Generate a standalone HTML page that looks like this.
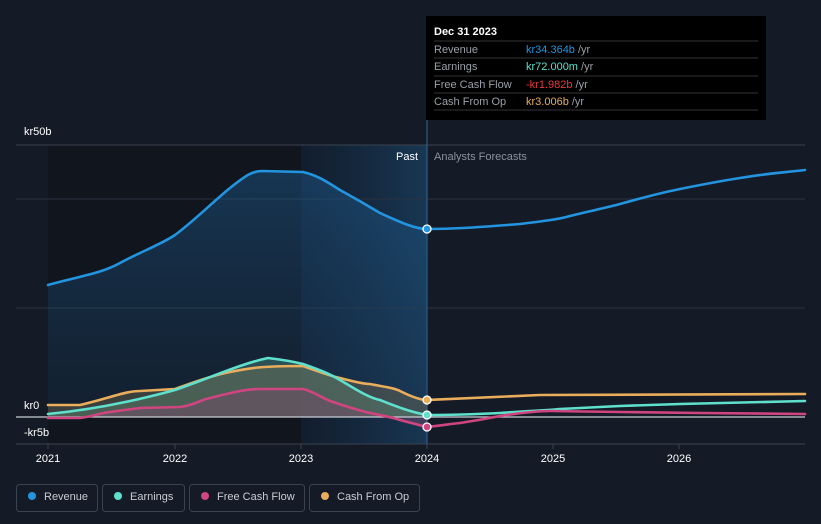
<html><body style="margin:0;width:821px;height:524px;background:#151b26;overflow:hidden;font-family:'Liberation Sans',sans-serif">
<svg width="821" height="524" style="position:absolute;left:0;top:0">
<defs>
<linearGradient id="rg" x1="0" y1="0" x2="0" y2="1"><stop offset="0" stop-color="#1f5f95" stop-opacity=".55"/><stop offset="1" stop-color="#1a3a5a" stop-opacity=".35"/></linearGradient>
<linearGradient id="band" x1="0" y1="0" x2="1" y2="0"><stop offset="0" stop-color="#173252" stop-opacity=".3"/><stop offset="1" stop-color="#1a4060" stop-opacity=".8"/></linearGradient>
</defs>
<rect x="48" y="145" width="379" height="299" fill="#10151e"/>
<rect x="301" y="145" width="126" height="299" fill="url(#band)"/>
<g stroke="#2a3240" stroke-width="1"><line x1="16" y1="199" x2="805" y2="199"/><line x1="16" y1="308" x2="805" y2="308"/></g>
<line x1="16" y1="145" x2="805" y2="145" stroke="#3a4350"/>
<line x1="16" y1="444" x2="805" y2="444" stroke="#3a4350"/>
<line x1="427" y1="120" x2="427" y2="444" stroke="#2f6a95"/>
<path d="M48,285 C80,276 100,274 120,263 C140,252 160,245 175,235 C195,220 215,200 230,188 C245,176 252,171 262,171 L303,172 C320,176 330,184 340,190 C360,201 370,207 380,213 C400,222 415,229 427,229 L427,417 L48,417Z" fill="url(#rg)" opacity=".8"/>
<path d="M48,414 C80,411 120,405 175,390 C210,378 240,364 268,358 C285,360 295,362 303,364 C320,370 330,374 340,380 C360,392 370,398 380,400 C395,406 410,412 427,415 L427,417 L48,417Z" fill="#3f7f78" opacity=".5"/>
<path d="M48,405 L80,405 C110,398 125,391 140,391 L175,389 C200,380 215,375 230,372 C250,368 260,366 303,366 C320,372 330,376 340,378 C355,382 365,384 370,384 C385,387 395,388 400,391 C410,396 420,400 427,400 L427,417 L48,417Z" fill="#8a7a55" opacity=".35"/>
<path d="M48,418 L80,418 C95,416 100,413 110,412 L140,408 L180,407 C195,405 200,400 210,398 C230,393 245,389 260,389 L303,389 C315,392 320,397 330,401 C345,406 360,411 370,413 C385,416 395,418 400,420 L427,427 L427,417 L48,417Z" fill="#7a4a6a" opacity=".45"/>
<line x1="16" y1="417" x2="805" y2="417" stroke="#c8ccd2" stroke-width="1.2"/>
<g fill="none" stroke-width="2.6" stroke-linecap="round">
<path d="M48,285 C80,276 100,274 120,263 C140,252 160,245 175,235 C195,220 215,200 230,188 C245,176 252,171 262,171 L303,172 C320,176 330,184 340,190 C360,201 370,207 380,213 C400,222 415,229 427,229 C450,229 470,228 520,224 C545,221 560,219 570,216 C590,211 605,208 620,204 C645,197 660,193 680,189 C710,183 720,181 740,178 C770,173 790,172 805,170" stroke="#2394df"/>
<path d="M48,405 L80,405 C110,398 125,391 140,391 L175,389 C200,380 215,375 230,372 C250,368 260,366 303,366 C320,372 330,376 340,378 C355,382 365,384 370,384 C385,387 395,388 400,391 C410,396 420,400 427,400 C450,399 470,398 540,395 L805,394" stroke="#e9ad5c"/>
<path d="M48,414 C80,411 120,405 175,390 C210,378 240,364 268,358 C285,360 295,362 303,364 C320,370 330,374 340,380 C360,392 370,398 380,400 C395,406 410,412 427,415 C460,415 480,414 500,413 C530,411 550,410 560,409 L620,406 L680,404 L805,401" stroke="#5ee0cd"/>
<path d="M48,418 L80,418 C95,416 100,413 110,412 L140,408 L180,407 C195,405 200,400 210,398 C230,393 245,389 260,389 L303,389 C315,392 320,397 330,401 C345,406 360,411 370,413 C385,416 395,418 400,420 L427,427 C445,425 450,424 460,423 C480,420 490,418 500,416 C520,413 535,411 550,411 L620,412 L700,413 L805,414" stroke="#d0457f"/>
</g>
<g stroke="#fff" stroke-width="1.3"><circle cx="427" cy="229" r="4" fill="#2394df"/><circle cx="427" cy="400" r="4" fill="#e9ad5c"/><circle cx="427" cy="415" r="4" fill="#5ee0cd"/><circle cx="427" cy="427" r="4" fill="#d0457f"/></g>
<g stroke="#3a4350"><line x1="48" y1="444" x2="48" y2="449"/><line x1="175" y1="444" x2="175" y2="449"/><line x1="301" y1="444" x2="301" y2="449"/><line x1="427" y1="444" x2="427" y2="449"/><line x1="553" y1="444" x2="553" y2="449"/><line x1="679" y1="444" x2="679" y2="449"/></g>
<g font-size="11" fill="#fff" text-anchor="middle"><text x="48" y="462">2021</text><text x="175" y="462">2022</text><text x="301" y="462">2023</text><text x="427" y="462">2024</text><text x="553" y="462">2025</text><text x="679" y="462">2026</text></g>
<g font-size="11" fill="#fff"><text x="24" y="135">kr50b</text><text x="24" y="409">kr0</text><text x="24" y="436">-kr5b</text></g>
<text x="418" y="160" font-size="11" fill="#fff" text-anchor="end">Past</text>
<text x="434" y="160" font-size="11" fill="#8a929e">Analysts Forecasts</text>
<rect x="426" y="16" width="340" height="104" fill="#000"/>
<g stroke="#333" stroke-width="1"><line x1="434" y1="41" x2="758" y2="41"/><line x1="434" y1="58" x2="758" y2="58"/><line x1="434" y1="76" x2="758" y2="76"/><line x1="434" y1="93" x2="758" y2="93"/><line x1="434" y1="110" x2="758" y2="110"/></g>
<g font-size="11"><text x="434" y="35" fill="#fff" font-weight="bold">Dec 31 2023</text>
<text x="434" y="53" fill="#9aa0a8">Revenue</text><text x="526" y="53" fill="#2394df">kr34.364b <tspan fill="#9aa0a8">/yr</tspan></text>
<text x="434" y="70" fill="#9aa0a8">Earnings</text><text x="526" y="70" fill="#5ee0cd">kr72.000m <tspan fill="#9aa0a8">/yr</tspan></text>
<text x="434" y="88" fill="#9aa0a8">Free Cash Flow</text><text x="526" y="88" fill="#e8383d">-kr1.982b <tspan fill="#9aa0a8">/yr</tspan></text>
<text x="434" y="105" fill="#9aa0a8">Cash From Op</text><text x="526" y="105" fill="#e9ad5c">kr3.006b <tspan fill="#9aa0a8">/yr</tspan></text></g>
<g fill="none" stroke="#3a4350"><rect x="16.5" y="484.5" width="81" height="27" rx="3"/><rect x="102.5" y="484.5" width="82" height="27" rx="3"/><rect x="189.5" y="484.5" width="115" height="27" rx="3"/><rect x="309.5" y="484.5" width="110" height="27" rx="3"/></g>
<circle cx="32" cy="496" r="4" fill="#2394df"/><circle cx="118" cy="496" r="4" fill="#5ee0cd"/><circle cx="205" cy="496" r="4" fill="#d0457f"/><circle cx="325" cy="496" r="4" fill="#e9ad5c"/>
<g font-size="11" fill="#c8ccd2"><text x="44" y="500">Revenue</text><text x="130" y="500">Earnings</text><text x="217" y="500">Free Cash Flow</text><text x="337" y="500">Cash From Op</text></g>
</svg>
</body></html>
